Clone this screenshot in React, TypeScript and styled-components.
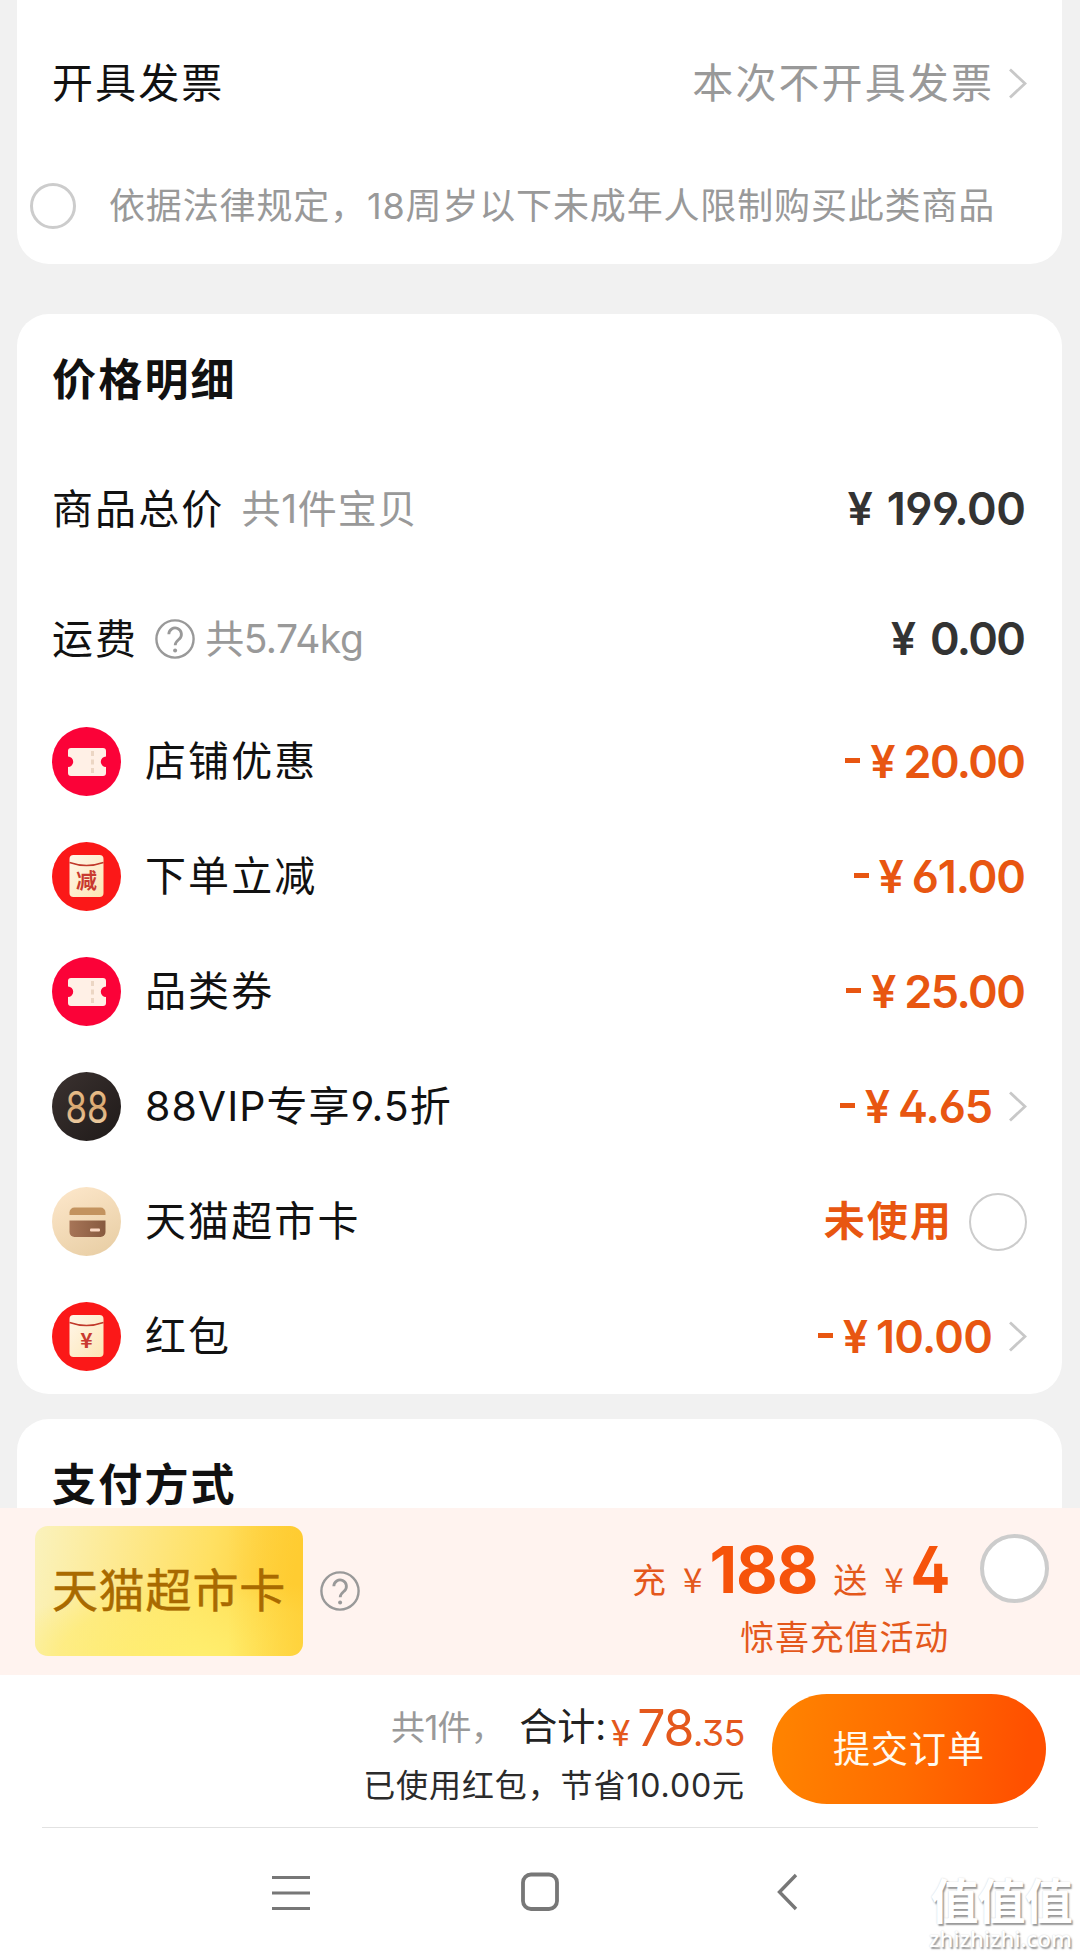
import React from 'react';
import styled, { createGlobalStyle } from 'styled-components';

const GlobalStyle = createGlobalStyle`
  * { box-sizing: border-box; }
  body {
    margin: 0;
    background: #f1f1f1;
    font-family: Inter, "Noto Sans CJK SC", sans-serif;
    font-feature-settings: "ss01";
  }
`;

const Page = styled.div`
  position: relative;
  display: flex;
  flex-direction: column;
  width: 1080px;
  height: 1957px;
  overflow: hidden;
  background: #f1f1f1;
`;

const Scroll = styled.main`
  flex: none;
  display: flex;
  flex-direction: column;
  height: 1508px;
  padding: 0 18px 0 17px;
`;

const Card = styled.section<{ $gap?: number; $radius?: string; $h: number }>`
  flex: none;
  display: flex;
  flex-direction: column;
  height: ${p => p.$h}px;
  margin-top: ${p => p.$gap ?? 0}px;
  padding: 0 35px;
  border-radius: ${p => p.$radius ?? '32px'};
  background: #fff;
`;

const Row = styled.div<{ $h: number }>`
  flex: none;
  display: flex;
  align-items: center;
  height: ${p => p.$h}px;
`;

const Label = styled.span<{ $ls?: number }>`
  font-size: 41px;
  line-height: 50px;
  letter-spacing: ${p => p.$ls ?? 2.1}px;
  color: #111;
  white-space: nowrap;
`;

const ItemLabel = styled(Label)`
  padding-bottom: 2px;
`;

const Muted = styled(Label)`
  font-size: 39px;
  color: #999;
`;

const InvoiceValue = styled(Label)`
  color: #999;
`;

const Title = styled.h2`
  margin: 0;
  padding-top: 1px;
  font-size: 44px;
  line-height: 48px;
  font-weight: 700;
  letter-spacing: 2.2px;
  color: #111;
`;

const Agreement = styled.span`
  font-size: 36px;
  line-height: 46px;
  letter-spacing: 0.85px;
  color: #999;
  white-space: nowrap;
`;

const Right = styled.div`
  display: flex;
  align-items: center;
  margin-left: auto;
`;

const Radio = styled.span<{ $size: number; $border: number }>`
  flex: none;
  width: ${p => p.$size}px;
  height: ${p => p.$size}px;
  border: ${p => p.$border}px solid #ccc;
  border-radius: 50%;
  background: #fff;
`;

const AgreementRow = styled(Row)`
  margin-left: -22px;
  gap: 33px;
`;

const AmountBox = styled.span<{ $accent?: boolean }>`
  display: flex;
  align-items: baseline;
  margin-right: 1px;
  font-size: 45px;
  line-height: 54px;
  font-weight: 600;
  color: ${p => (p.$accent ? '#e85611' : '#333')};
`;

const Yen = styled.span<{ $gap: number }>`
  font-size: 45px;
  width: 25px;
  display: flex;
  justify-content: center;
  margin-right: ${p => p.$gap}px;
`;

const Minus = styled.span`
  width: 15px;
  height: 5px;
  margin: 0 10px 2px 0;
  align-self: center;
  background: currentColor;
`;

const Digits = styled.span<{ $ls: number }>`
  letter-spacing: ${p => p.$ls}px;
  margin-right: ${p => -p.$ls}px;
`;

const Unused = styled(Label)`
  margin-right: 16px;
  padding-bottom: 2px;
  font-weight: 600;
  color: #e85611;
`;

const ChevronSlot = styled.span`
  display: flex;
  margin-left: 14px;
`;

const IconSlot = styled.span`
  display: flex;
  margin-right: 24px;
`;

const HelpSlot = styled.span<{ $l: number; $r: number }>`
  display: flex;
  margin: 0 ${p => p.$r}px 0 ${p => p.$l}px;
`;

const Banner = styled.section`
  flex: none;
  display: flex;
  align-items: center;
  height: 167px;
  padding: 0 31px 1px 35px;
  background: #fff3ef;
`;

const GiftCard = styled.div`
  display: flex;
  align-items: center;
  justify-content: center;
  width: 268px;
  height: 130px;
  padding-bottom: 2px;
  border-radius: 13px;
  background:
    linear-gradient(90deg, rgba(255, 204, 48, 0) 72%, rgba(255, 204, 48, 0.65) 98%),
    radial-gradient(ellipse 75% 62% at 62% 100%, rgba(255, 240, 112, 0.9) 0, rgba(255, 236, 106, 0.55) 70%, rgba(255, 236, 110, 0) 100%),
    linear-gradient(100deg, #faf2bd 0%, #fdea94 28%, #ffe062 62%, #ffcc33 92%);
  font-size: 46px;
  line-height: 56px;
  letter-spacing: 0.8px;
  color: #a96a00;
  -webkit-text-stroke: 0.5px #a96a00;
`;

const Promo = styled.div`
  display: flex;
  flex-direction: column;
  align-items: flex-end;
  align-self: flex-start;
  margin: 29px 0 0 auto;
  color: #e4581c;
`;

const PromoLine = styled.div`
  display: flex;
  align-items: baseline;
  height: 66px;
  font-size: 34px;
  line-height: 66px;
`;

const PromoYen = styled.span<{ $l: number; $r: number }>`
  margin: 0 ${p => p.$r}px 0 ${p => p.$l}px;
  font-family: "Noto Sans CJK SC", sans-serif;
  font-size: 35px;
`;

const PromoWord = styled.span`
  margin-left: 16px;
`;

const Big = styled.span`
  font-size: 64px;
  font-weight: 700;
  letter-spacing: -1px;
  color: #f6530b;
`;

const BigNarrow = styled(Big)`
  margin-left: -3px;
  transform: scaleX(0.92);
  transform-origin: right;
`;

const PromoNote = styled.div`
  margin-top: 13px;
  font-size: 34px;
  line-height: 44px;
  letter-spacing: 0.8px;
`;

const BannerRadio = styled.span`
  display: flex;
  align-self: flex-start;
  margin: 26px 0 0 31px;
`;

const Checkout = styled.section`
  flex: none;
  display: flex;
  align-items: center;
  justify-content: flex-end;
  height: 152px;
  padding: 0 34px 4px 0;
  background: #fff;
`;

const Summary = styled.div`
  display: flex;
  flex-direction: column;
  align-items: flex-end;
  align-self: flex-start;
  margin: 24px 27px 0 0;
`;

const TotalLine = styled.div`
  display: flex;
  align-items: center;
  height: 56px;
  line-height: 56px;
  white-space: nowrap;
`;

const TotalGroup = styled.div<{ $top?: number }>`
  display: flex;
  align-items: baseline;
  padding-top: ${p => p.$top ?? 0}px;
`;

const Count = styled.span`
  font-size: 34px;
  letter-spacing: -0.7px;
  color: #999;
`;

const TotalLabel = styled.span`
  margin-left: 15px;
  font-size: 38px;
  letter-spacing: 0;
  color: #222;
`;

const Total = styled.span<{ $size: number; $ls?: number; $l?: number }>`
  margin-left: ${p => p.$l ?? 0}px;
  font-size: ${p => p.$size}px;
  letter-spacing: ${p => p.$ls ?? 0}px;
  color: #e4581c;
`;

const Saved = styled.div`
  margin-top: 9px;
  font-size: 32px;
  line-height: 44px;
  letter-spacing: 0.9px;
  color: #2b2b2b;
  white-space: nowrap;
`;

const Submit = styled.button`
  width: 274px;
  height: 110px;
  padding: 0 0 4px;
  border: 0;
  border-radius: 55px;
  background: linear-gradient(95deg, #ff8200 5%, #ff6c00 50%, #ff5000 92%);
  font-family: inherit;
  font-size: 37px;
  letter-spacing: 1px;
  color: #fffaf0;
`;

const Nav = styled.nav`
  flex: none;
  display: flex;
  justify-content: space-between;
  height: 129px;
  margin: 0;
  padding: 44px 282px 0 272px;
  background: #fff;
`;

const Divider = styled.hr`
  flex: none;
  width: 1080px;
  height: 1px;
  margin: 0;
  border: 0;
  border-left: 42px solid #fff;
  border-right: 42px solid #fff;
  background: #e2e2e2;
`;

const Watermark = styled.div`
  position: absolute;
  right: 8px;
  bottom: 6px;
  display: flex;
  flex-direction: column;
  align-items: flex-end;
  color: #fff;
  text-shadow: 1.5px 1.5px 1.5px #999, 0 0 1.5px #ccc;
`;

const MarkTitle = styled.span`
  font-size: 48px;
  line-height: 48px;
  font-weight: 700;
  letter-spacing: -0.8px;
`;

const MarkUrl = styled.span`
  font-family: "Noto Sans", sans-serif;
  font-size: 22px;
  line-height: 25px;
  font-weight: 500;
  letter-spacing: 0.1px;
`;

const Chevron = () => (
  <svg width="19" height="31" viewBox="0 0 19 31" fill="none" stroke="#c8c8c8" strokeWidth="2.8">
    <path d="M2 1.5 17 15.5 2 29.5" />
  </svg>
);

const Help = () => (
  <svg width="40" height="40" viewBox="0 0 40 40" fill="none" stroke="#999" strokeWidth="2.4">
    <circle cx="20" cy="20" r="18.6" />
    <path d="M13.8 15.2a6.3 6.3 0 1 1 10.6 4.7c-2.6 2.2-4.2 3.2-4.2 6.4" strokeWidth="2.8" />
    <circle cx="20.1" cy="31.6" r="2" fill="#999" stroke="none" />
  </svg>
);

const Ticket = () => (
  <svg width="69" height="69" viewBox="0 0 69 69">
    <circle cx="34.5" cy="34.5" r="34.5" fill="#fb0238" />
    <path
      d="M19 21h32a3 3 0 0 1 3 3v5.5a5.2 5.2 0 0 0 0 10.4V46a3 3 0 0 1-3 3H19a3 3 0 0 1-3-3v-6.1a5.2 5.2 0 0 0 0-10.4V24a3 3 0 0 1 3-3z"
      fill="#fff0e6"
    />
    <path d="M40.5 24v5M40.5 32.5v5M40.5 41v5" stroke="#ecd6c4" strokeWidth="3" />
  </svg>
);

const GlyphMark = styled.text`
  font-family: "Noto Sans CJK SC", sans-serif;
  font-weight: 700;
  text-anchor: middle;
  fill: #c93a30;
`;

const Envelope = ({ mark }: { mark: string }) => (
  <svg width="69" height="69" viewBox="0 0 69 69">
    <defs>
      <linearGradient id="paper" x1="0" y1="0" x2="1" y2="1">
        <stop offset="0" stopColor="#fff6ea" />
        <stop offset="1" stopColor="#fde6b4" />
      </linearGradient>
    </defs>
    <circle cx="34.5" cy="34.5" r="34.5" fill="#fb1818" />
    <rect x="17.5" y="13" width="34" height="42" rx="4" fill="url(#paper)" />
    <path d="M17.5 20.5Q34.5 26.5 51.5 20.5" fill="none" stroke="#c0392b" strokeWidth="1.5" />
    <GlyphMark x="34.5" y="45.5" fontSize="21">{mark}</GlyphMark>
  </svg>
);

const VipText = styled.text`
  font-family: Inter, sans-serif;
  font-size: 44px;
  font-weight: 400;
  text-anchor: middle;
`;

const Vip = () => (
  <svg width="69" height="69" viewBox="0 0 69 69">
    <defs>
      <linearGradient id="gold" x1="0" y1="0" x2="0" y2="1">
        <stop offset="0" stopColor="#f3cd9b" />
        <stop offset="0.5" stopColor="#d9a871" />
        <stop offset="1" stopColor="#f7e0bd" />
      </linearGradient>
      <linearGradient id="night" x1="0" y1="0" x2="1" y2="1">
        <stop offset="0" stopColor="#3b3230" />
        <stop offset="1" stopColor="#1f1a19" />
      </linearGradient>
    </defs>
    <circle cx="34.5" cy="34.5" r="34.5" fill="url(#night)" />
    <VipText x="35" y="50.5" textLength="43" lengthAdjust="spacingAndGlyphs" fill="url(#gold)">88</VipText>
  </svg>
);

const MarketCard = () => (
  <svg width="69" height="69" viewBox="0 0 69 69">
    <defs>
      <linearGradient id="sand" x1="0.2" y1="0" x2="0.7" y2="1">
        <stop offset="0" stopColor="#fce6c9" />
        <stop offset="1" stopColor="#e9cfa6" />
      </linearGradient>
      <linearGradient id="wood" x1="0" y1="0" x2="1" y2="0">
        <stop offset="0" stopColor="#a77557" />
        <stop offset="1" stopColor="#875a3f" />
      </linearGradient>
    </defs>
    <circle cx="34.5" cy="34.5" r="34.5" fill="url(#sand)" />
    <path d="M17.5 28v-2.5a5 5 0 0 1 5-5h26a5 5 0 0 1 5 5V28z" fill="#c3935f" />
    <path d="M17.5 33.5h36V45a5 5 0 0 1-5 5h-26a5 5 0 0 1-5-5z" fill="url(#wood)" />
    <rect x="38" y="41.5" width="10" height="3" rx="1" fill="#fbd9c4" />
  </svg>
);

const Amount = ({ value, accent, ls }: { value: string; accent?: boolean; ls: number }) => (
  <AmountBox $accent={accent}>
    {accent && <Minus />}
    <Yen $gap={accent ? 8 : 14}>¥</Yen>
    <Digits $ls={ls}>{value}</Digits>
  </AmountBox>
);

type Discount = {
  icon: React.ReactNode;
  name: string;
  value?: string;
  more?: boolean;
  nameSpacing?: number;
  spacing?: number;
};

const discounts: Discount[] = [
  { icon: <Ticket />, name: '店铺优惠', value: '20.00', spacing: -1.6 },
  { icon: <Envelope mark="减" />, name: '下单立减', value: '61.00', spacing: -1.1 },
  { icon: <Ticket />, name: '品类券', value: '25.00', spacing: -1.5 },
  { icon: <Vip />, name: '88VIP专享9.5折', value: '4.65', more: true, nameSpacing: 1.05, spacing: -1.1 },
  { icon: <MarketCard />, name: '天猫超市卡' },
  { icon: <Envelope mark="¥" />, name: '红包', value: '10.00', more: true, spacing: -0.7 },
];

export default function App() {
  return (
    <Page>
      <GlobalStyle />
      <Scroll>
        <Card $h={264} $radius="0 0 32px 32px">
          <Row $h={166}>
            <Label>开具发票</Label>
            <Right>
              <InvoiceValue>本次不开具发票</InvoiceValue>
              <ChevronSlot><Chevron /></ChevronSlot>
            </Right>
          </Row>
          <AgreementRow $h={80}>
            <Radio $size={46} $border={3} />
            <Agreement>依据法律规定，18周岁以下未成年人限制购买此类商品</Agreement>
          </AgreementRow>
        </Card>

        <Card $h={1080} $gap={50}>
          <Row $h={130}><Title>价格明细</Title></Row>
          <Row $h={130}>
            <Label>商品总价</Label>
            <HelpSlot $l={17} $r={0} />
            <Muted $ls={0.8}>共1件宝贝</Muted>
            <Right><Amount value="199.00" ls={-0.4} /></Right>
          </Row>
          <Row $h={130}>
            <Label>运费</Label>
            <HelpSlot $l={17} $r={10}><Help /></HelpSlot>
            <Muted $ls={-0.5}>共5.74kg</Muted>
            <Right><Amount value="0.00" ls={-1.6} /></Right>
          </Row>
          {discounts.map(d => (
            <Row key={d.name} $h={115}>
              <IconSlot>{d.icon}</IconSlot>
              <ItemLabel $ls={d.nameSpacing}>{d.name}</ItemLabel>
              <Right>
                {d.value ? (
                  <Amount value={d.value} accent ls={d.spacing ?? 0} />
                ) : (
                  <>
                    <Unused>未使用</Unused>
                    <Radio $size={58} $border={2.5} />
                  </>
                )}
                {d.more && <ChevronSlot><Chevron /></ChevronSlot>}
              </Right>
            </Row>
          ))}
        </Card>

        <Card $h={89} $gap={25} $radius="32px 32px 0 0">
          <Row $h={130}><Title>支付方式</Title></Row>
        </Card>
      </Scroll>

      <Banner>
        <GiftCard>天猫超市卡</GiftCard>
        <HelpSlot $l={17} $r={0}><Help /></HelpSlot>
        <Promo>
          <PromoLine>
            <span>充</span>
            <PromoYen $l={17} $r={7}>¥</PromoYen>
            <Big>188</Big>
            <PromoWord>送</PromoWord>
            <PromoYen $l={17} $r={6}>¥</PromoYen>
            <BigNarrow>4</BigNarrow>
          </PromoLine>
          <PromoNote>惊喜充值活动</PromoNote>
        </Promo>
        <BannerRadio><Radio $size={69} $border={4} /></BannerRadio>
      </Banner>

      <Checkout>
        <Summary>
          <TotalLine>
            <TotalGroup>
              <Count>共1件，</Count>
              <TotalLabel>合计:</TotalLabel>
            </TotalGroup>
            <TotalGroup $top={6}>
              <Total $size={35} $l={5} $ls={2}>¥</Total>
              <Total $size={50} $l={5} $ls={-1.5}>78</Total>
              <Total $size={36} $ls={-0.5}>.35</Total>
            </TotalGroup>
          </TotalLine>
          <Saved>已使用红包，节省10.00元</Saved>
        </Summary>
        <Submit>提交订单</Submit>
      </Checkout>
      <Divider />
      <Nav>
        <svg width="38" height="40" viewBox="0 0 38 40" stroke="#777" strokeWidth="3">
          <path d="M0 5.5h38M0 21h38M0 36.5h38" />
        </svg>
        <svg width="38" height="40" viewBox="0 0 38 40" fill="none" stroke="#777" strokeWidth="3.8">
          <rect x="2" y="2.5" width="34" height="34.5" rx="8" />
        </svg>
        <svg width="28" height="40" viewBox="-7 0 28 40" fill="none" stroke="#777" strokeWidth="3.4">
          <path d="M19 3 2.5 20 19 37" />
        </svg>
      </Nav>
      <Watermark>
        <MarkTitle>值值值</MarkTitle>
        <MarkUrl>zhizhizhi.com</MarkUrl>
      </Watermark>
    </Page>
  );
}
